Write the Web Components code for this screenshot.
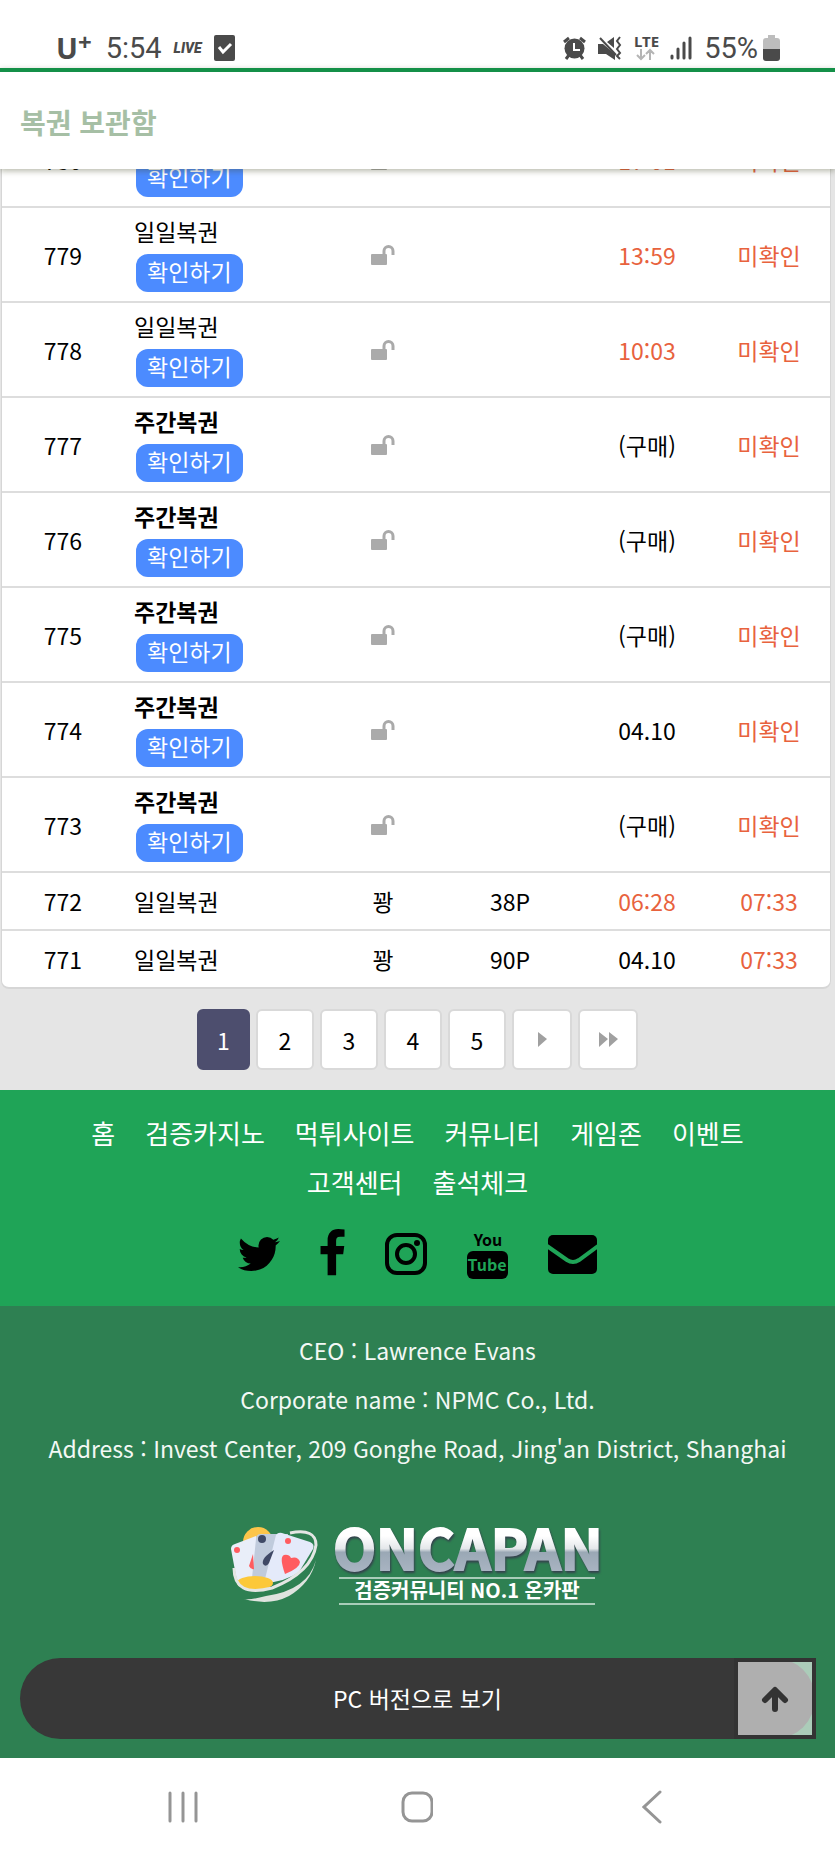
<!DOCTYPE html>
<html lang="ko">
<head>
<meta charset="utf-8">
<meta name="viewport" content="width=device-width, initial-scale=1">
<title>복권 보관함</title>
<style>
    body {
        margin: 0;
        background: #fff;
        color: #000;
        font-family: "Noto Sans CJK KR", sans-serif;
        font-size: 23px;
        line-height: 34px;
    }
</style>
</head>
<body>
<status-bar></status-bar>
<page-header>복권 보관함</page-header>
<lottery-list></lottery-list>
<site-footer></site-footer>
<system-nav></system-nav>

<script>
(function() {
    function attach(element, html) {
        const template = document.createElement("template");
        template.innerHTML = html;
        const root = element.attachShadow({mode: "open"});
        root.appendChild(template.content.cloneNode(true));
        return root;
    }

    class StatusBar extends HTMLElement {
        constructor() {
            super();
            attach(this, `
                <style>
                    :host {
                        display: flex;
                        justify-content: space-between;
                        align-items: center;
                        height: 40px;
                        padding: 28px 55px 0 56px;
                        color: #4a4a4a;
                        font-family: Roboto, sans-serif;
                        font-size: 29px;
                        line-height: 40px;
                    }
                    div { display: flex; align-items: center; gap: 12px; }
                    .carrier { display: flex; margin-right: 2px; font: 700 29px/40px "Noto Sans", sans-serif; }
                    .carrier sup { font-size: 24px; line-height: 28px; }
                    .live { font: italic 900 14px/40px Roboto, sans-serif; }
                    .power { gap: 5px; }
                    svg { display: block; overflow: visible; }
                </style>
                <div>
                    <span class="carrier">U<sup>+</sup></span>
                    <span>5:54</span>
                    <span class="live">LIVE</span>
                    <svg width="21" height="26" viewBox="0 0 21 26"><rect width="21" height="26" rx="2" fill="#4a4a4a"/><path d="M5 12l4 5 8-8" fill="none" stroke="#fff" stroke-width="3"/></svg>
                </div>
                <div>
                    <svg width="23" height="24" viewBox="0 0 23 24">
                        <g fill="none" stroke="#4a4a4a" stroke-width="3"><path d="M1 6l5-4M22 6l-5-4M6 19l-3 4M17 19l3 4"/></g>
                        <circle cx="11.500" cy="12.500" r="10" fill="#4a4a4a"/>
                        <path d="M11 7v7h6" fill="none" stroke="#fff" stroke-width="2"/>
                    </svg>
                    <svg width="24" height="24" viewBox="0 0 24 24" fill="#4a4a4a">
                        <path d="M0 8h5l12 10v6l-9-6H0zM16 1v11L9 6z"/>
                        <path d="M2 2l16 17" stroke="#4a4a4a" stroke-width="2"/>
                        <path d="M22 1l-3 4 3 4-3 4 3 4-3 3 3 3" fill="none" stroke="#4a4a4a" stroke-width="2"/>
                    </svg>
                    <svg width="24" height="26" viewBox="0 0 24 26">
                        <text x="0" y="12" font-family="Noto Sans" font-size="15" font-weight="700" fill="#4a4a4a">LTE</text>
                        <path d="M7 14v10M3 20l4 4 4-4M16 25V15M12 19l4-4 4 4" fill="none" stroke="#b5b5b5" stroke-width="2"/>
                    </svg>
                    <svg width="22" height="24" viewBox="0 0 22 24"><path d="M2 20v2M8 13v9M14 7v15M20 2v20" stroke="#4a4a4a" stroke-width="3" stroke-linecap="round"/></svg>
                    <div class="power">
                        <span>55%</span>
                        <svg width="17" height="26" viewBox="0 0 17 26"><path d="M5 0h7v3h2q3 0 3 3v8H0V6q0-3 3-3h2z" fill="#bdbdbd"/><path d="M0 14h17v9q0 3-3 3H3q-3 0-3-3z" fill="#4a4a4a"/></svg>
                    </div>
                </div>
            `);
        }
    }

    class PageHeader extends HTMLElement {
        constructor() {
            super();
            attach(this, `
                <style>
                    :host {
                        display: block;
                        position: relative;
                        z-index: 1;
                        padding: 30px 20px 27px;
                        border-top: 4px solid #149048;
                        background: #fff;
                        box-shadow: 0 2px 6px rgba(70, 75, 40, .4);
                    }
                    h1 { margin: 0; color: #a6bfa5; font-size: 28px; line-height: 40px; }
                </style>
                <h1><slot></slot></h1>
            `);
        }
    }

    // [번호, 복권, 결과, 포인트, 시간, 상태]
    const TICKETS = [
        ["780", "일일복권", "", "", "17:01", "미확인"],
        ["779", "일일복권", "", "", "13:59", "미확인"],
        ["778", "일일복권", "", "", "10:03", "미확인"],
        ["777", "주간복권", "", "", "(구매)", "미확인"],
        ["776", "주간복권", "", "", "(구매)", "미확인"],
        ["775", "주간복권", "", "", "(구매)", "미확인"],
        ["774", "주간복권", "", "", "04.10", "미확인"],
        ["773", "주간복권", "", "", "(구매)", "미확인"],
        ["772", "일일복권", "꽝", "38P", "06:28", "07:33"],
        ["771", "일일복권", "꽝", "90P", "04.10", "07:33"]
    ];

    const LOCK = `<svg width="24" height="20" viewBox="0 0 24 20" role="img" aria-label="열림"><rect y="9" width="16" height="11" rx="1" fill="#aaa"/><path d="M13 9V6a4.500 4.500 0 0 1 9 0v4" fill="none" stroke="#aaa" stroke-width="3"/></svg>`;

    class LotteryList extends HTMLElement {
        constructor() {
            super();
            this.root = attach(this, `
                <style>
                    :host { display: block; overflow: hidden; padding-bottom: 20px; background: #e5e5e5; }
                    .card {
                        margin: -57px 4px 0 1px;
                        border: 1px solid #d6d6d6;
                        border-bottom-width: 2px;
                        border-radius: 8px;
                        background: #fff;
                        overflow: hidden;
                    }
                    table { width: 100%; table-layout: fixed; border-collapse: collapse; }
                    td { height: 93px; padding: 0; border-bottom: 2px solid #ddd; text-align: center; }
                    tr.done td { height: 56px; }
                    tr:last-child td { border-bottom: 0; }
                    .no { width: 122px; }
                    .result { width: 102px; }
                    .point { width: 152px; }
                    .time { width: 122px; }
                    td.name { box-sizing: border-box; padding: 0 0 4px 10px; text-align: left; }
                    tr.done td.name { padding-bottom: 0; }
                    .name span { display: block; }
                    .weekly span { font-weight: 700; }
                    .hot { color: #e8623d; }
                    button {
                        display: block;
                        margin: 6px 0 0 2px;
                        padding: 0 11px 4px;
                        border: 0;
                        border-radius: 12px;
                        background: #4c8bff;
                        color: #fff;
                        font: inherit;
                    }
                    svg { display: block; margin: 0 auto; }
                    page-list { margin-top: 20px; }
                </style>
                <div class="card">
                    <table>
                        <colgroup><col class="no"><col><col class="result"><col class="point"><col class="time"><col class="time"></colgroup>
                        <tbody></tbody>
                    </table>
                </div>
                <page-list></page-list>
            `);
        }

        connectedCallback() {
            this.root.querySelector("tbody").innerHTML = TICKETS.map(([no, name, result, point, time, state]) => `
                <tr class="${result ? "done" : ""}">
                    <td>${no}</td>
                    <td class="name ${name === "주간복권" ? "weekly" : ""}"><span>${name}</span>${result ? "" : "<button type=\"button\">확인하기</button>"}</td>
                    <td>${result || LOCK}</td>
                    <td>${point}</td>
                    <td class="${time.includes(":") ? "hot" : ""}">${time}</td>
                    <td class="hot">${state}</td>
                </tr>`).join("");
        }
    }

    class PageList extends HTMLElement {
        constructor() {
            super();
            attach(this, `
                <style>
                    :host { display: block; }
                    nav { display: flex; justify-content: center; gap: 6px; }
                    a {
                        display: flex;
                        align-items: center;
                        justify-content: center;
                        box-sizing: border-box;
                        width: 58px;
                        height: 61px;
                        border: 2px solid #d9d9d9;
                        border-radius: 6px;
                        background: #fff;
                        color: #000;
                        text-decoration: none;
                    }
                    a.on { width: 53px; border-color: #4d4e6e; background: #4d4e6e; color: #fff; }
                    a.move { width: 60px; }
                </style>
                <nav>
                    <a class="on" href="#1" aria-current="page">1</a>
                    <a href="#2">2</a>
                    <a href="#3">3</a>
                    <a href="#4">4</a>
                    <a href="#5">5</a>
                    <a class="move" href="#6" aria-label="다음"><svg width="9" height="15"><path d="M0 0l9 7-9 8z" fill="#a0a0a0"/></svg></a>
                    <a class="move" href="#last" aria-label="맨끝"><svg width="19" height="15"><path d="M0 0l9 7-9 8zM10 0l9 7-9 8z" fill="#a0a0a0"/></svg></a>
                </nav>
            `);
        }
    }

    class SiteFooter extends HTMLElement {
        constructor() {
            super();
            attach(this, `
                <style>
                    :host { display: block; background: #2e8052; color: #fff; text-align: center; }
                    a { color: inherit; text-decoration: none; }
                    .menu { padding: 18px 0 27px; background: #1fa457; }
                    .links {
                        display: flex;
                        flex-wrap: wrap;
                        justify-content: center;
                        column-gap: 30px;
                        padding: 0 60px;
                        font-size: 26px;
                        line-height: 49px;
                    }
                    .social { display: flex; justify-content: center; align-items: center; gap: 40px; height: 50px; margin-top: 23px; color: #000; }
                    .social svg { display: block; fill: currentColor; }
                    .info { padding: 20px 20px 51px; line-height: 49px; }
                    .info p { margin: 0; color: #f3f8f5; }
                    .bottom { position: relative; padding: 0 20px 19px; }
                    .pc { display: block; border-radius: 41px; background: #383838; line-height: 81px; }
                    .top {
                        position: absolute;
                        top: 0;
                        right: 19px;
                        display: flex;
                        align-items: center;
                        justify-content: center;
                        width: 82px;
                        height: 81px;
                        padding: 0;
                        border: 4px solid #333;
                        background: rgba(255, 255, 255, .6);
                    }
                </style>
                <div class="menu">
                    <nav class="links">
                        <a href="#">홈</a>
                        <a href="#">검증카지노</a>
                        <a href="#">먹튀사이트</a>
                        <a href="#">커뮤니티</a>
                        <a href="#">게임존</a>
                        <a href="#">이벤트</a>
                        <a href="#">고객센터</a>
                        <a href="#">출석체크</a>
                    </nav>
                    <div class="social">
                        <a href="#" aria-label="Twitter"><svg width="42" height="48" viewBox="108 0 1577 1792"><path d="M1684 408q-67 98-162 167 1 14 1 42 0 130-38 259.500t-115.500 248.500-184.500 210.500-258 146-323 54.500q-271 0-496-145 35 4 78 4 225 0 401-138-105-2-188-64.500t-114-159.500q33 5 61 5 43 0 85-11-112-23-185.500-111.500t-73.500-205.500v-4q68 38 146 41-66-44-105-115t-39-154q0-88 44-163 121 149 294.500 238.500t371.500 99.500q-8-38-8-74 0-134 94.500-228.500t228.500-94.500q140 0 236 102 109-21 205-78-37 115-142 178 93-10 186-50z"/></svg></a>
                        <a href="#" aria-label="Facebook"><svg width="25" height="50" viewBox="460 0 900 1792"><path d="M1343 12v264h-157q-86 0-116 36t-30 108v189h293l-39 296h-254v759h-306v-759h-255v-296h255v-218q0-186 104-288.500t277-102.500q147 0 228 12z"/></svg></a>
                        <a href="#" aria-label="Instagram"><svg width="42" height="42" viewBox="0 0 42 42"><rect x="2" y="2" width="38" height="38" rx="10" fill="none" stroke="#000" stroke-width="4"/><circle cx="21" cy="21" r="9" fill="none" stroke="#000" stroke-width="4"/><circle cx="32" cy="10" r="3"/></svg></a>
                        <a href="#" aria-label="YouTube"><svg width="41" height="50" viewBox="0 0 41 50"><rect y="22" width="41" height="28" rx="6"/><g font-family="Noto Sans CJK KR, sans-serif" font-weight="700" text-anchor="middle"><text x="21" y="17" font-size="16">You</text><text x="20" y="42" font-size="16" fill="#1fa457">Tube</text></g></svg></a>
                        <a href="#" aria-label="E-mail"><svg width="49" height="39" viewBox="0 0 49 39"><rect width="49" height="39" rx="5"/><path d="M-1 11l20 14q6 4 12 0l19-14" fill="none" stroke="#1fa457" stroke-width="4"/></svg></a>
                    </div>
                </div>
                <div class="info">
                    <p>CEO : Lawrence Evans</p>
                    <p>Corporate name : NPMC Co., Ltd.</p>
                    <p>Address : Invest Center, 209 Gonghe Road, Jing'an District, Shanghai</p>
                </div>
                <site-logo></site-logo>
                <div class="bottom">
                    <a class="pc" href="#">PC 버전으로 보기</a>
                    <button class="top" type="button" aria-label="위로"><svg width="28" height="26" viewBox="0 0 28 26"><path d="M14 23V5M4 14L14 4l10 10" fill="none" stroke="#333" stroke-width="6" stroke-linecap="round" stroke-linejoin="round"/></svg></button>
                </div>
            `);
        }
    }

    class SiteLogo extends HTMLElement {
        constructor() {
            super();
            attach(this, `
                <style>
                    :host { display: flex; justify-content: center; height: 134px; }
                    svg { display: block; overflow: visible; }
                    .name { filter: drop-shadow(1px 2px 1px #34404c); }
                </style>
                <svg width="376" height="90" viewBox="0 0 376 90" role="img" aria-label="ONCAPAN">
                    <defs>
                        <linearGradient id="metal" gradientUnits="userSpaceOnUse" x1="0" y1="3" x2="0" y2="48">
                            <stop offset=".2" stop-color="#fff"/>
                            <stop offset=".48" stop-color="#e4e7ea"/>
                            <stop offset=".56" stop-color="#9aa8b5"/>
                            <stop offset="1" stop-color="#a9b4c2"/>
                        </linearGradient>
                    </defs>
                    <circle cx="28" cy="18" r="15" fill="#fcc54a"/>
                    <path d="M1 25q0-4 4-5l21-8 14 40-26 11q-6-3-8-11z" fill="#e9eef9"/>
                    <path d="M26 15q0-5 5-5h27l-10 46-26-2z" fill="#c0cbdc"/>
                    <path d="M46 11q2-3 6-2l28 9q5 2 3 7L69 48q-14 10-35 11z" fill="#e4eafa"/>
                    <circle cx="7" cy="26" r="3" fill="#ff5c60"/>
                    <path d="M23 30l-4 12q2 4 5 3z" fill="#ff5c60"/>
                    <circle cx="32" cy="15" r="4" fill="#3f4966"/>
                    <path d="M44 26q-13 8-11 14 3 4 6-1z" fill="#3f4966"/>
                    <circle cx="58" cy="17" r="3" fill="#ff5c60"/>
                    <path d="M55 50q-6-17-1-19 5-1 7 3 7-2 9 4 0 6-15 12z" fill="#ff5c60"/>
                    <ellipse cx="25" cy="59" rx="18" ry="7" fill="#fcc839"/>
                    <path d="M60 9q26-5 26 12Q82 48 42 64 4 74 4 44" fill="none" stroke="#e4e6e4" stroke-width="3"/>
                    <path d="M86 36q-8 30-50 36-14 4-22 3 26 7 45-3 22-13 27-36z" fill="#dfe3df"/>
                    <text class="name" x="103" y="46" font-family="Noto Sans CJK KR, sans-serif" font-size="56" font-weight="700" fill="url(#metal)" stroke="url(#metal)" stroke-width="2">ONCAPAN</text>
                    <path d="M109 54h256M109 80h256" stroke="#a9cdb9" stroke-width="2"/>
                    <text x="237" y="74" text-anchor="middle" font-family="Noto Sans CJK KR, sans-serif" font-size="20" font-weight="700" fill="#fff">검증커뮤니티 NO.1 온카판</text>
                </svg>
            `);
        }
    }

    class SystemNav extends HTMLElement {
        constructor() {
            super();
            attach(this, `
                <style>
                    :host { display: grid; grid-template-columns: repeat(3, 1fr); height: 98px; padding: 0 66px; background: #fff; }
                    button { display: flex; align-items: center; justify-content: center; padding: 0; border: 0; background: none; }
                    svg { fill: none; stroke: #959595; stroke-width: 3; stroke-linecap: round; }
                </style>
                <button type="button" aria-label="최근 앱"><svg width="30" height="32"><path d="M2 2v28M15 2v28M28 2v28"/></svg></button>
                <button type="button" aria-label="홈"><svg width="32" height="32"><rect x="2" y="2" width="29" height="28" rx="9"/></svg></button>
                <button type="button" aria-label="뒤로"><svg width="20" height="34"><path d="M18 2L2 17l16 15"/></svg></button>
            `);
        }
    }

    customElements.define("status-bar", StatusBar);
    customElements.define("page-header", PageHeader);
    customElements.define("page-list", PageList);
    customElements.define("lottery-list", LotteryList);
    customElements.define("site-logo", SiteLogo);
    customElements.define("site-footer", SiteFooter);
    customElements.define("system-nav", SystemNav);
})();
</script>
</body>
</html>
